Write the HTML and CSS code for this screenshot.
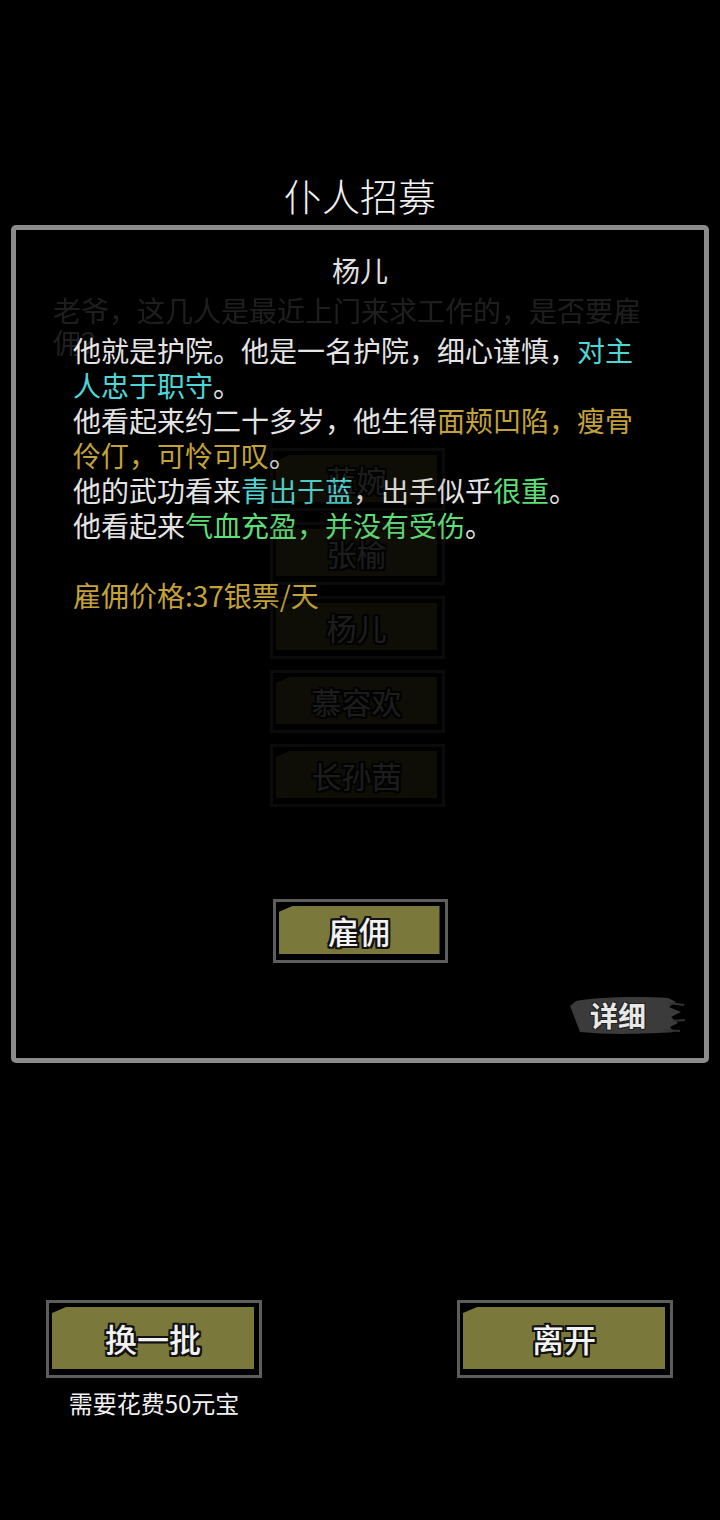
FILE: index.html
```html
<!DOCTYPE html>
<html>
 <head>
  <meta charset="utf-8">
  <meta name="viewport" content="width=device-width, initial-scale=1.0">
  <title>仆人招募</title>
  <link rel="stylesheet" href="styles.css">
 </head>
 <body>
  <div class="screen">
   <h1 class="title">仆人招募</h1>

   <div class="panel">
    <!-- 底层：仆人列表（被弹窗压暗） -->
    <div class="layer under">
     <p class="intro">老爷，这几人是最近上门来求工作的，是否要雇佣？</p>
     <div class="list">
      <div class="btn item"><div class="face">蓝婉</div></div>
      <div class="btn item"><div class="face">张榆</div></div>
      <div class="btn item"><div class="face">杨儿</div></div>
      <div class="btn item"><div class="face">慕容欢</div></div>
      <div class="btn item"><div class="face">长孙茜</div></div>
     </div>
    </div>

    <!-- 上层：详情 -->
    <div class="layer detail">
     <div class="name">杨儿</div>
     <div class="desc">
      <p>他就是护院。他是一名护院，细心谨慎，<span class="cyan">对主人忠于职守</span>。</p>
      <p>他看起来约二十多岁，他生得<span class="gold">面颊凹陷，瘦骨伶仃，可怜可叹</span>。</p>
      <p>他的武功看来<span class="cyan">青出于蓝</span>，出手似乎<span class="green">很重</span>。</p>
      <p>他看起来<span class="green">气血充盈，并没有受伤</span>。</p>
      <p class="price gold">雇佣价格:37银票/天</p>
     </div>
     <div class="btn hire"><div class="face">雇佣</div></div>
     <div class="more">
      <svg width="118" height="42" viewBox="0 0 118 42">
       <path d="M8 7 C30 3 70 2 100 4 L108 8 L101 13 L113 18 L103 23 L110 29 L102 33 L106 38 C80 40 40 41 12 38 C9 30 6 22 2 12 Z" fill="#3b3b3b"/>
       <path d="M100 9 L116 11 M104 27 L117 26 M96 36 L112 37" stroke="#333" stroke-width="2"/>
      </svg>
      <span>详细</span>
     </div>
    </div>
   </div>

   <div class="bottom">
    <div class="col">
     <div class="btn big"><div class="face">换一批</div></div>
     <div class="cost">需要花费50元宝</div>
    </div>
    <div class="col">
     <div class="btn big"><div class="face">离开</div></div>
    </div>
   </div>
  </div>
 </body>
</html>
```

FILE: styles.css
```css
body {
  margin: 0;
  background: #000;
  color: #e6e6e6;
  font-family: "Noto Sans CJK SC", "Noto Sans", sans-serif;
}

p {
  margin: 0;
}

.screen {
  width: 720px;
  height: 1520px;
  padding-top: 170px;
  box-sizing: border-box;
}

.title {
  margin: 0;
  font-size: 38px;
  font-weight: 300;
  line-height: 50px;
  height: 50px;
  text-align: center;
  color: #f2f2f2;
}

.panel {
  margin: 5px 11px 0;
  height: 838px;
  box-sizing: border-box;
  border: 5px solid #8b8b8b;
  border-radius: 5px;
  display: grid;
}

.layer {
  grid-area: 1 / 1;
  display: flex;
  flex-direction: column;
}

/* 底层 */
.under {
  opacity: 0.12;
}

.intro {
  padding: 64px 0 0 37px;
  font-size: 28px;
  line-height: 32px;
  color: #fff;
  width: 600px;
}

.list {
  margin-top: 90px;
  padding-right: 5px;
  display: flex;
  flex-direction: column;
  align-items: center;
  gap: 11px;
}

/* 按钮 */
.btn {
  box-sizing: border-box;
  border: 3px solid #5d5d5d;
  background: #000;
  padding: 4px 5px 6px 3px;
  display: flex;
}

.face {
  flex: 1;
  background: #7a783b;
  clip-path: polygon(14px 0, 100% 0, 100% 100%, 0 100%, 0 6px);
  display: flex;
  align-items: center;
  justify-content: center;
  color: #f2f2f2;
  font-weight: 500;
  text-shadow: 2px 0 0 #111, -2px 0 0 #111, 0 2px 0 #111, 0 -2px 0 #111,
               2px 2px 0 #111, -2px -2px 0 #111, 2px -2px 0 #111, -2px 2px 0 #111;
}

.item {
  width: 175px;
  height: 63px;
}

.item .face {
  font-size: 30px;
  font-weight: normal;
}

.hire {
  width: 175px;
  height: 64px;
  margin-top: 286px;
  align-self: center;
}

.hire .face {
  font-size: 31px;
}

.big {
  width: 216px;
  height: 78px;
}

.big .face {
  font-size: 32px;
}

/* 详情 */
.name {
  margin-top: 20px;
  font-size: 28px;
  line-height: 40px;
  text-align: center;
  color: #e0e0e0;
}

.desc {
  margin-top: 43px;
  padding-left: 57px;
  width: 562px;
  font-size: 28px;
  line-height: 35px;
  color: #e4e4e4;
}

.price {
  margin-top: 35px;
}

.cyan {
  color: #4cd6d6;
}

.gold {
  color: #c4a23a;
}

.green {
  color: #5ddf78;
}

.more {
  align-self: flex-end;
  margin: 31px 18px 0 0;
  width: 118px;
  height: 42px;
  display: grid;
}

.more svg,
.more span {
  grid-area: 1 / 1;
}

.more span {
  font-size: 28px;
  font-weight: bold;
  line-height: 42px;
  padding-left: 22px;
  color: #e8e8e8;
  text-shadow: 1px 1px 0 #222, -1px -1px 0 #222, 1px -1px 0 #222, -1px 1px 0 #222;
}

/* 底部 */
.bottom {
  margin-top: 237px;
  display: flex;
  justify-content: space-between;
  padding: 0 47px 0 46px;
}

.col {
  display: flex;
  flex-direction: column;
  align-items: center;
}

.cost {
  margin-top: 10px;
  font-size: 24px;
  line-height: 30px;
  color: #f0f0f0;
}
```
